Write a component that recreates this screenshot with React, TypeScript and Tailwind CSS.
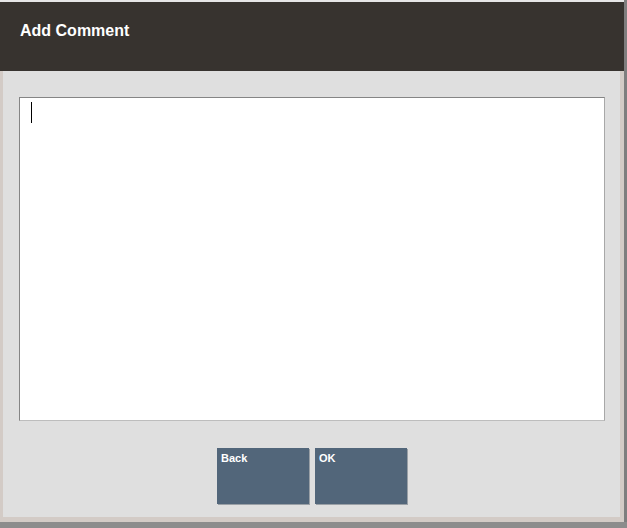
const App = () => {
  return (
    <div className="flex h-[528px] w-[627px] flex-col bg-[#8c8c8c] font-['Liberation_Sans',Arial,sans-serif]">
      <div className="flex h-[522px] w-[627px]">
        <main className="flex w-[624px] flex-col bg-[#e6e6e6] pt-[2px]">
          <header className="flex h-[69px] shrink-0 items-center bg-[#37332f] pl-[20px] pb-[12px]">
            <h1 className="text-[16px] font-bold text-white">Add Comment</h1>
          </header>
          <section className="flex flex-1 flex-col border-b-[5px] border-l-[3px] border-r-[4px] border-[#d3cbc6] bg-[#dfdfdf] pl-[16px] pr-[15px] pt-[26px]">
            <div className="relative h-[324px] w-[586px] border border-t-[#858585] border-l-[#858585] border-r-[#a8a8a8] border-b-[#bdbdbd] bg-white">
              <span className="absolute left-[11px] top-[4px] h-[21px] w-px bg-black" />
            </div>
            <div className="mt-[27px] flex justify-center gap-[6px]">
              <button className="flex h-[56px] w-[92px] items-start bg-[#52667a] px-[4px] pt-[2px] text-left text-[11px] font-bold text-white shadow-[1px_1px_0_#9aa0a6]">
                Back
              </button>
              <button className="flex h-[56px] w-[92px] items-start bg-[#52667a] px-[4px] pt-[2px] text-left text-[11px] font-bold text-white shadow-[1px_1px_0_#9aa0a6]">
                OK
              </button>
            </div>
          </section>
        </main>
        <div className="w-[3px] bg-[#7e7e7e]" />
      </div>
      <div className="h-[6px] bg-[#8c8c8c]" />
    </div>
  );
};

export default App;
